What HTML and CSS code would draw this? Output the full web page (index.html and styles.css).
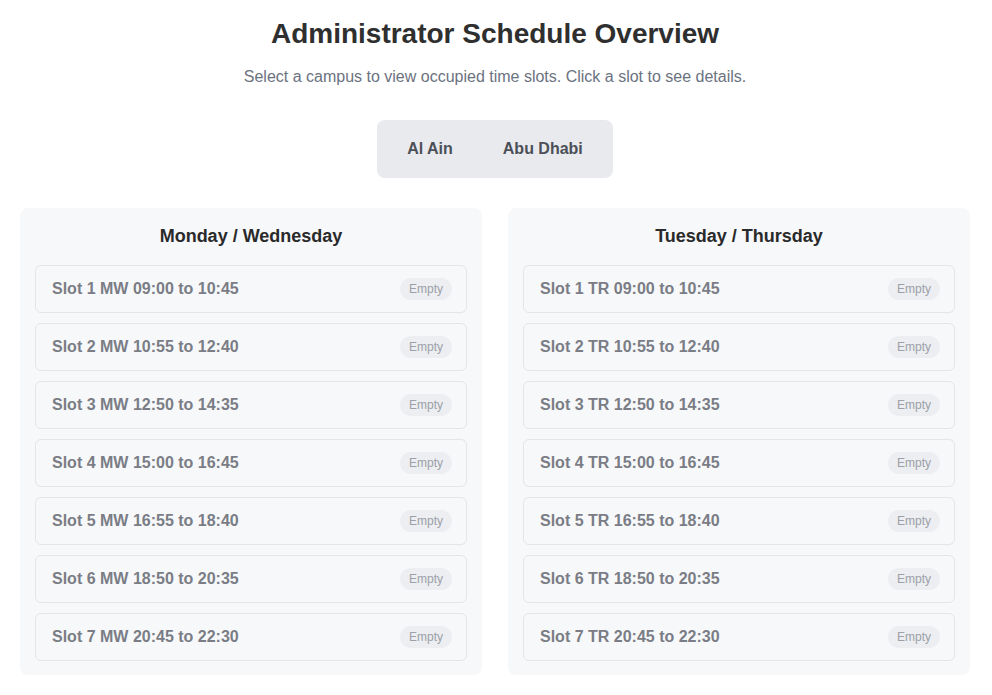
FILE: index.html
```html
<!DOCTYPE html>
<html lang="en">
<head>
<meta charset="utf-8">
<title>Administrator Schedule Overview</title>
<link rel="stylesheet" href="styles.css">
</head>
<body>
<div class="page">
  <h1 class="title">Administrator Schedule Overview</h1>
  <p class="subtitle">Select a campus to view occupied time slots. Click a slot to see details.</p>
  <div class="tabs-wrap">
    <div class="tabs">
      <button class="tab">Al Ain</button>
      <button class="tab">Abu Dhabi</button>
    </div>
  </div>
  <div class="columns">
    <section class="column">
      <h2 class="col-title">Monday / Wednesday</h2>
      <div class="slots">
        <div class="slot"><span class="slot-name">Slot 1 MW 09:00 to 10:45</span><span class="badge">Empty</span></div>
        <div class="slot"><span class="slot-name">Slot 2 MW 10:55 to 12:40</span><span class="badge">Empty</span></div>
        <div class="slot"><span class="slot-name">Slot 3 MW 12:50 to 14:35</span><span class="badge">Empty</span></div>
        <div class="slot"><span class="slot-name">Slot 4 MW 15:00 to 16:45</span><span class="badge">Empty</span></div>
        <div class="slot"><span class="slot-name">Slot 5 MW 16:55 to 18:40</span><span class="badge">Empty</span></div>
        <div class="slot"><span class="slot-name">Slot 6 MW 18:50 to 20:35</span><span class="badge">Empty</span></div>
        <div class="slot"><span class="slot-name">Slot 7 MW 20:45 to 22:30</span><span class="badge">Empty</span></div>
      </div>
    </section>
    <section class="column">
      <h2 class="col-title">Tuesday / Thursday</h2>
      <div class="slots">
        <div class="slot"><span class="slot-name">Slot 1 TR 09:00 to 10:45</span><span class="badge">Empty</span></div>
        <div class="slot"><span class="slot-name">Slot 2 TR 10:55 to 12:40</span><span class="badge">Empty</span></div>
        <div class="slot"><span class="slot-name">Slot 3 TR 12:50 to 14:35</span><span class="badge">Empty</span></div>
        <div class="slot"><span class="slot-name">Slot 4 TR 15:00 to 16:45</span><span class="badge">Empty</span></div>
        <div class="slot"><span class="slot-name">Slot 5 TR 16:55 to 18:40</span><span class="badge">Empty</span></div>
        <div class="slot"><span class="slot-name">Slot 6 TR 18:50 to 20:35</span><span class="badge">Empty</span></div>
        <div class="slot"><span class="slot-name">Slot 7 TR 20:45 to 22:30</span><span class="badge">Empty</span></div>
      </div>
    </section>
  </div>
</div>
</body>
</html>
```
FILE: styles.css
```css
* { box-sizing: border-box; }
html, body { margin: 0; padding: 0; background: #ffffff; }
body {
  font-family: "Liberation Sans", Arial, sans-serif;
  color: #333333;
}
.page {
  width: 950px;
  margin: 0 0 0 20px;
  padding-top: 18px;
}
.title {
  margin: 0;
  text-align: center;
  font-size: 28px;
  line-height: 32px;
  font-weight: 700;
  color: #2f2f2f;
}
.subtitle {
  margin: 17px 0 0;
  text-align: center;
  font-size: 16px;
  line-height: 20px;
  color: #6b7280;
}
.tabs-wrap {
  display: flex;
  justify-content: center;
  margin-top: 33px;
}
.tabs {
  display: flex;
  gap: 6px;
  padding: 8px;
  background: #e9eaee;
  border-radius: 8px;
}
.tab {
  font-family: inherit;
  font-size: 16px;
  font-weight: 700;
  color: #4b4f58;
  background: transparent;
  border: 0;
  padding: 0 22px;
  height: 42px;
  cursor: pointer;
}
.columns {
  display: grid;
  grid-template-columns: 1fr 1fr;
  gap: 26px;
  margin-top: 30px;
}
.column {
  background: #f7f8fa;
  border-radius: 8px;
  padding: 15px 15px 14px;
}
.col-title {
  margin: 2px 0 18px;
  text-align: center;
  font-size: 18px;
  line-height: 22px;
  font-weight: 700;
  color: #2a2a2a;
}
.slots {
  display: flex;
  flex-direction: column;
  gap: 10px;
}
.slot {
  display: flex;
  align-items: center;
  justify-content: space-between;
  height: 48px;
  padding: 0 14px 0 16px;
  border: 1px solid #e3e5e9;
  border-radius: 6px;
  background: #f7f8fa;
  cursor: pointer;
}
.slot-name {
  font-size: 16px;
  font-weight: 700;
  color: #7a7d85;
}
.badge {
  display: inline-block;
  font-size: 12px;
  line-height: 22px;
  height: 22px;
  padding: 0 9px;
  border-radius: 11px;
  background: #eceef1;
  color: #9ca0a8;
}
```
